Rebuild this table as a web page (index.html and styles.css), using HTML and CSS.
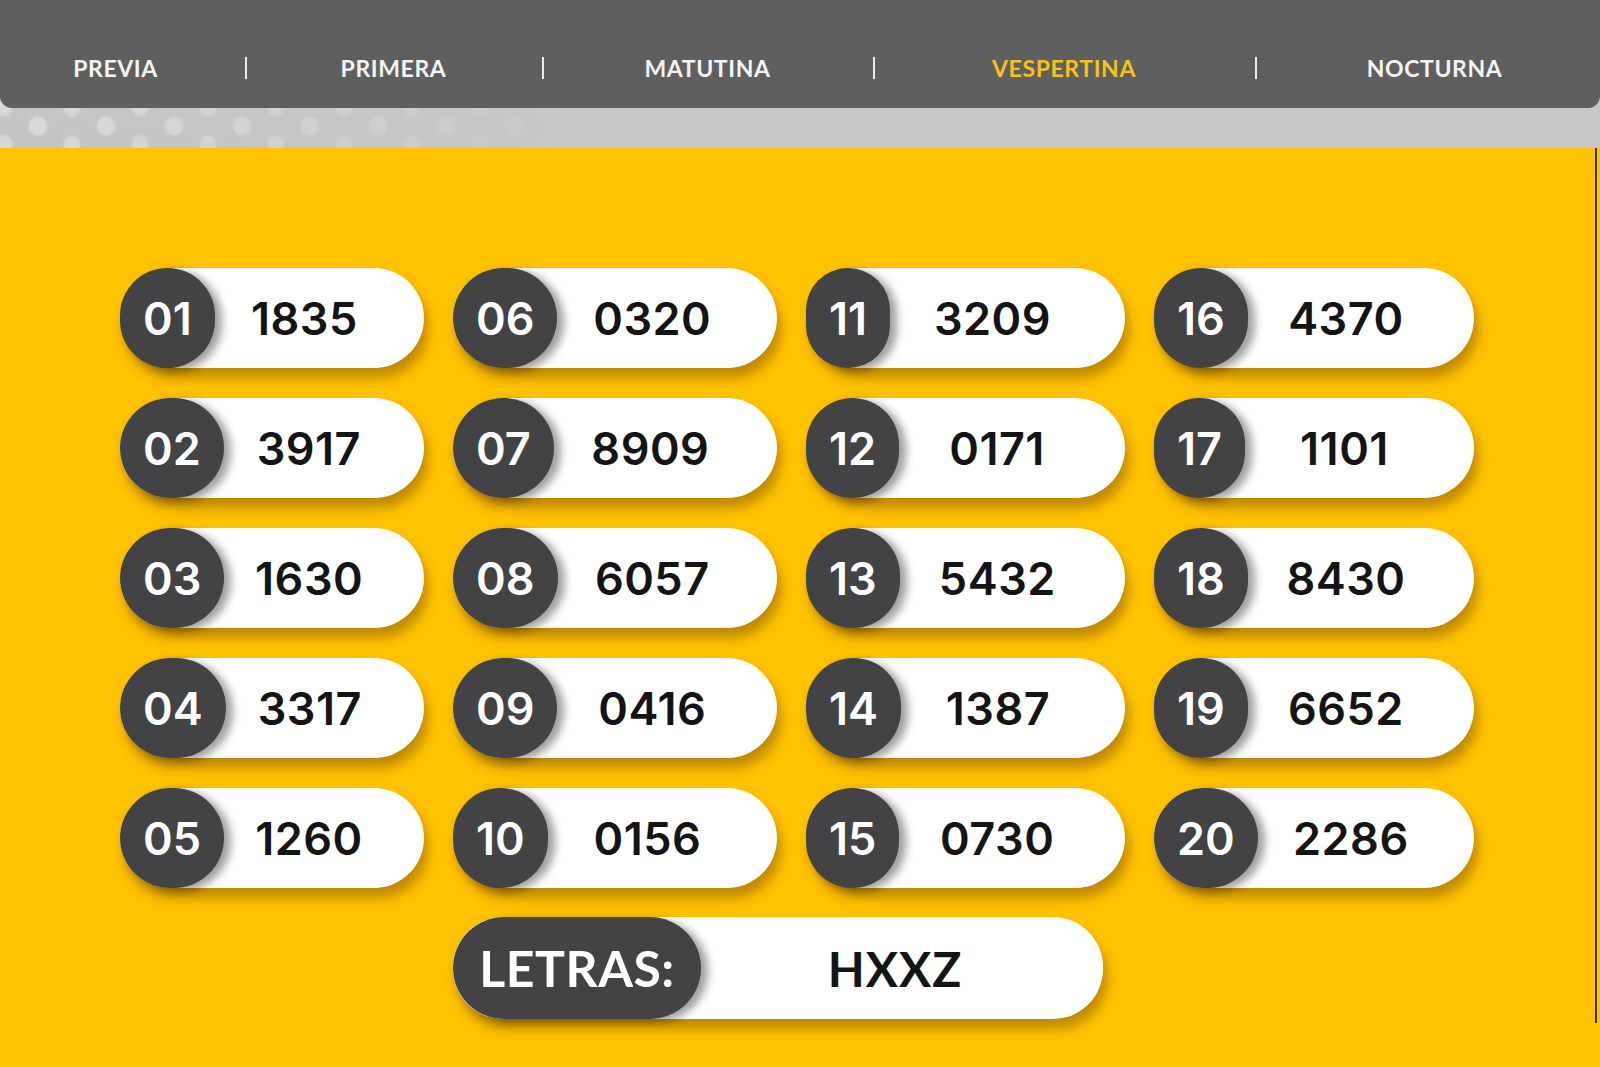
FILE: index.html
```html
<!DOCTYPE html>
<html lang="es">
<head>
<meta charset="utf-8">
<title>Quiniela Vespertina</title>
<link rel="stylesheet" href="styles.css">
</head>
<body>
<header class="header">
  <nav class="nav">
    <a class="nav-item first">PREVIA</a>
    <a class="nav-item sep">PRIMERA</a>
    <a class="nav-item sep">MATUTINA</a>
    <a class="nav-item sep active">VESPERTINA</a>
    <a class="nav-item sep last">NOCTURNA</a>
  </nav>
</header>
<main class="board">
  <div class="grid">
    <div class="pill"><span class="badge">01</span><span class="value">1835</span></div>
    <div class="pill"><span class="badge">06</span><span class="value">0320</span></div>
    <div class="pill"><span class="badge">11</span><span class="value">3209</span></div>
    <div class="pill"><span class="badge">16</span><span class="value">4370</span></div>

    <div class="pill"><span class="badge">02</span><span class="value">3917</span></div>
    <div class="pill"><span class="badge">07</span><span class="value">8909</span></div>
    <div class="pill"><span class="badge">12</span><span class="value">0171</span></div>
    <div class="pill"><span class="badge">17</span><span class="value">1101</span></div>

    <div class="pill"><span class="badge">03</span><span class="value">1630</span></div>
    <div class="pill"><span class="badge">08</span><span class="value">6057</span></div>
    <div class="pill"><span class="badge">13</span><span class="value">5432</span></div>
    <div class="pill"><span class="badge">18</span><span class="value">8430</span></div>

    <div class="pill"><span class="badge">04</span><span class="value">3317</span></div>
    <div class="pill"><span class="badge">09</span><span class="value">0416</span></div>
    <div class="pill"><span class="badge">14</span><span class="value">1387</span></div>
    <div class="pill"><span class="badge">19</span><span class="value">6652</span></div>

    <div class="pill"><span class="badge">05</span><span class="value">1260</span></div>
    <div class="pill"><span class="badge">10</span><span class="value">0156</span></div>
    <div class="pill"><span class="badge">15</span><span class="value">0730</span></div>
    <div class="pill"><span class="badge">20</span><span class="value">2286</span></div>
  </div>
  <div class="pill letras"><span class="badge letras-badge">LETRAS:</span><span class="value letras-value">HXXZ</span></div>
</main>
</body>
</html>
```
FILE: styles.css
```css
html, body {
  margin: 0;
  padding: 0;
}
body {
  background: #fec200;
  font-family: "Lato", "Liberation Sans", sans-serif;
  width: 1600px;
  height: 1067px;
  overflow: hidden;
}

/* ---------- header ---------- */
.header {
  height: 148px;
  background:
    linear-gradient(to right, rgba(199,199,201,0) 0, rgba(199,199,201,0.25) 200px, rgba(199,199,201,0.7) 420px, #c7c7c9 600px),
    radial-gradient(circle at 50% 50%, rgba(222,222,224,.95) 0, rgba(222,222,224,.8) 8px, rgba(222,222,224,0) 11px) 4px 108px / 68px 36px,
    radial-gradient(circle at 50% 50%, rgba(220,220,222,.9) 0, rgba(220,220,222,.75) 7px, rgba(220,220,222,0) 10px) 38px 126px / 68px 36px,
    linear-gradient(#cacacc, #c3c3c6);
  background-repeat: no-repeat, repeat, repeat, no-repeat;
}
.nav {
  height: 108px;
  box-sizing: border-box;
  padding-top: 56px;
  background: #5f5f5f;
  border-radius: 0 0 12px 12px;
  display: grid;
  grid-template-columns: 245px 297px 331px 382px 1fr;
  align-items: start;
}
.nav-item {
  display: flex;
  justify-content: center;
  align-items: center;
  height: 24px;
  color: #f4f4f4;
  font-size: 23px;
  font-weight: 700;
  letter-spacing: 0.6px;
  line-height: 24px;
  text-decoration: none;
}
.nav-item.first {
  padding-right: 14px;
}
.nav-item.last {
  padding-left: 14px;
}
.nav-item.sep {
  background: linear-gradient(#ececec, #ececec) left center / 2px 22px no-repeat;
}
.nav-item.active {
  color: #f6c21c;
}

/* ---------- board ---------- */
.board {
  box-sizing: border-box;
  width: 1597px;
  height: 875px;
  padding: 120px 0 0 120px;
  background: #fec200;
  border-right: 2px solid #3a2e12;
}
.grid {
  display: grid;
  grid-template-columns: 304px 324px 319px 320px;
  grid-auto-rows: 100px;
  column-gap: 29px;
  row-gap: 30px;
}
.pill {
  display: flex;
  height: 100px;
  background: #ffffff;
  border-radius: 50px;
  box-shadow: 4px 10px 11px rgba(120, 72, 0, 0.45);
}
.badge {
  display: flex;
  align-items: center;
  justify-content: center;
  box-sizing: border-box;
  min-width: 82px;
  padding: 0 23px;
  height: 100px;
  border-radius: 50px;
  background: #434345;
  color: #ffffff;
  font-family: "Inter", "Lato", sans-serif;
  font-size: 45px;
  font-weight: 600;
  font-variant-numeric: proportional-nums;
  box-shadow: 7px 3px 9px rgba(0, 0, 0, 0.38);
}
.value {
  flex: 1;
  display: flex;
  align-items: center;
  justify-content: center;
  padding-right: 30px;
  color: #141414;
  font-family: "Inter", "Lato", sans-serif;
  font-size: 45px;
  font-weight: 600;
  letter-spacing: 0.5px;
  font-variant-numeric: proportional-nums;
}

/* ---------- letras ---------- */
.letras {
  margin: 29px 0 0 333px;
  width: 650px;
  height: 102px;
}
.letras-badge {
  width: 248px;
  height: 102px;
  padding: 0;
  border-radius: 51px;
  font-family: "Lato", sans-serif;
  font-size: 50px;
  font-weight: 700;
  letter-spacing: 0.5px;
}
.letras-value {
  padding-right: 14px;
  font-family: "Lato", sans-serif;
  font-size: 48px;
  font-weight: 700;
  letter-spacing: 1px;
}
```
